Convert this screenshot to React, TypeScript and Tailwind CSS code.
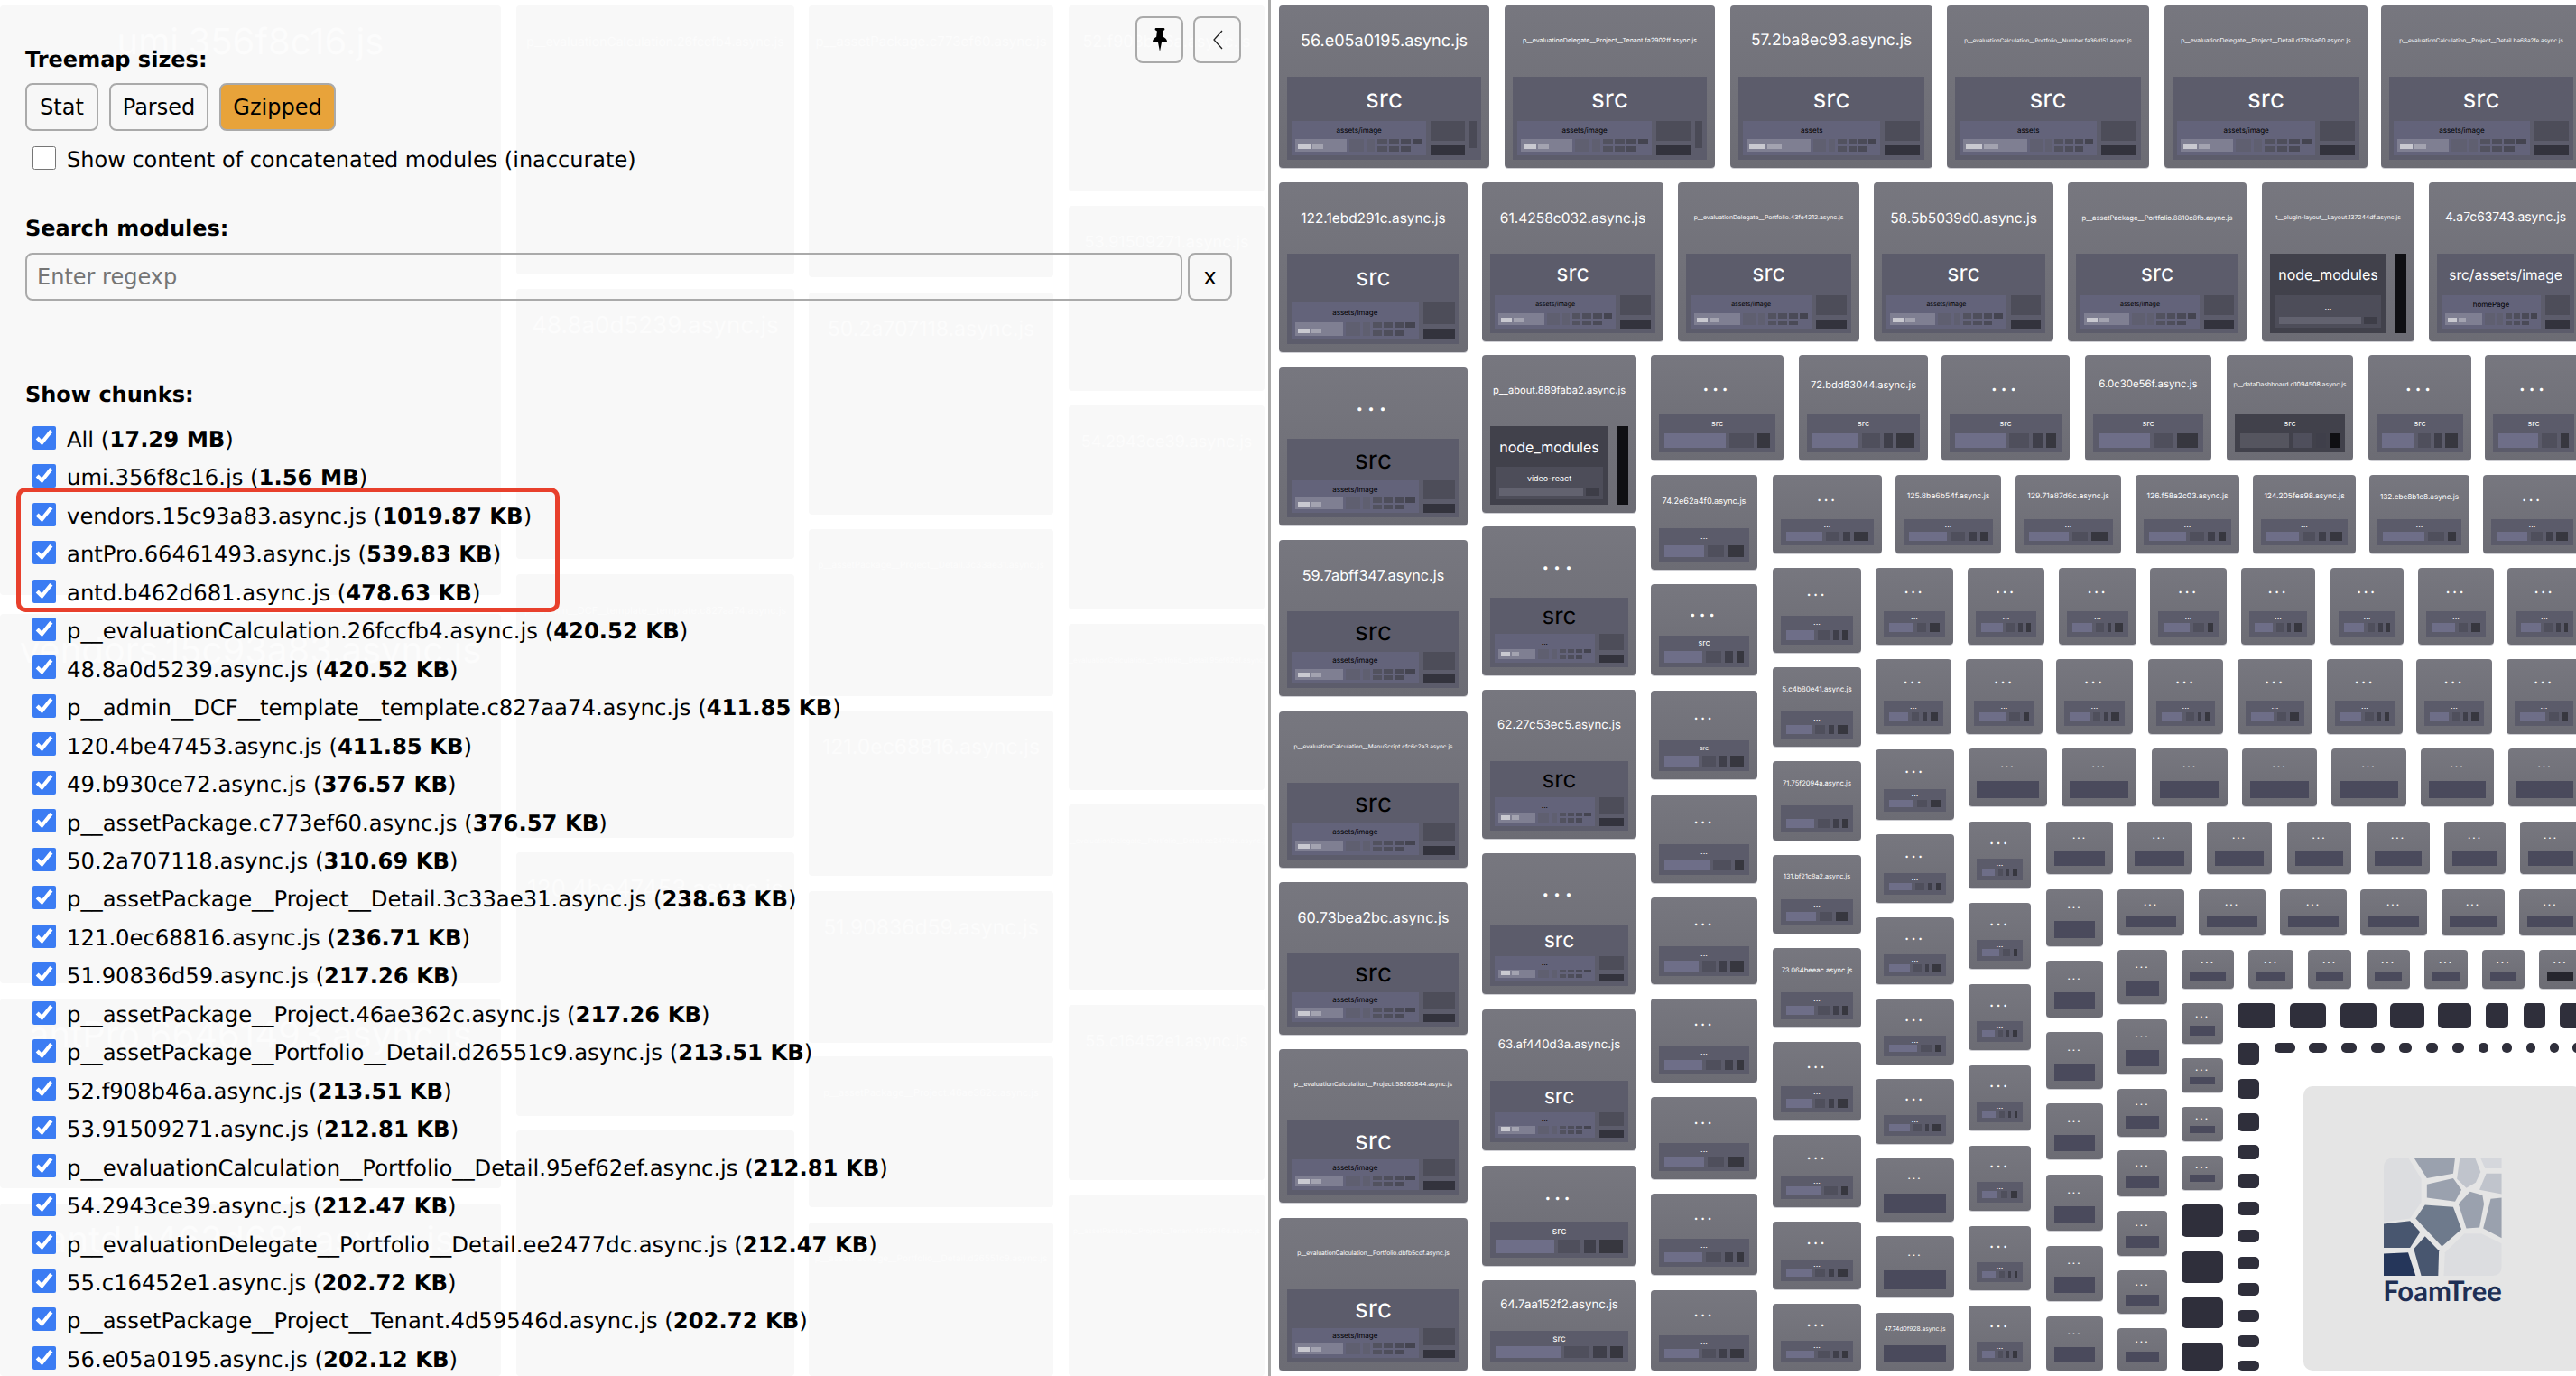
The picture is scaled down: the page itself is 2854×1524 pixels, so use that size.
type Variant = 'full' | 'mid' | 'midDark' | 'small' | 'plain' | 'plainDark' | 'nm' | 'solid';

type TileData = {
  x: number;
  y: number;
  r: number;
  b: number;
  title?: string;
  v?: Variant;
  label?: string;
  labelSize?: number;
  blackLabel?: boolean;
  sub?: string;
  subLabel?: string;
  bar?: boolean;
};

const CHUNKS = [
  ['All', '17.29 MB'],
  ['umi.356f8c16.js', '1.56 MB'],
  ['vendors.15c93a83.async.js', '1019.87 KB'],
  ['antPro.66461493.async.js', '539.83 KB'],
  ['antd.b462d681.async.js', '478.63 KB'],
  ['p__evaluationCalculation.26fccfb4.async.js', '420.52 KB'],
  ['48.8a0d5239.async.js', '420.52 KB'],
  ['p__admin__DCF__template__template.c827aa74.async.js', '411.85 KB'],
  ['120.4be47453.async.js', '411.85 KB'],
  ['49.b930ce72.async.js', '376.57 KB'],
  ['p__assetPackage.c773ef60.async.js', '376.57 KB'],
  ['50.2a707118.async.js', '310.69 KB'],
  ['p__assetPackage__Project__Detail.3c33ae31.async.js', '238.63 KB'],
  ['121.0ec68816.async.js', '236.71 KB'],
  ['51.90836d59.async.js', '217.26 KB'],
  ['p__assetPackage__Project.46ae362c.async.js', '217.26 KB'],
  ['p__assetPackage__Portfolio__Detail.d26551c9.async.js', '213.51 KB'],
  ['52.f908b46a.async.js', '213.51 KB'],
  ['53.91509271.async.js', '212.81 KB'],
  ['p__evaluationCalculation__Portfolio__Detail.95ef62ef.async.js', '212.81 KB'],
  ['54.2943ce39.async.js', '212.47 KB'],
  ['p__evaluationDelegate__Portfolio__Detail.ee2477dc.async.js', '212.47 KB'],
  ['55.c16452e1.async.js', '202.72 KB'],
  ['p__assetPackage__Project__Tenant.4d59546d.async.js', '202.72 KB'],
  ['56.e05a0195.async.js', '202.12 KB'],
];

// faint treemap that shows through the sidebar
const GHOSTS: [number, number, number, number, string, number][] = [
  [0, 6, 555, 659, 'umi.356f8c16.js', 40],
  [0, 680, 555, 1089, 'vendors.15c93a83.async.js', 40],
  [0, 1106, 555, 1316, 'antPro.66461493.async.js', 40],
  [0, 1333, 555, 1524, 'antd.b462d681.async.js', 40],
  [572, 6, 880, 304, 'p__evaluationCalculation.26fccfb4.async.js', 14],
  [572, 320, 880, 619, '48.8a0d5239.async.js', 26],
  [572, 636, 880, 928, 'p__admin__DCF__template__template.c827aa74.async.js', 11],
  [572, 944, 880, 1236, '120.4be47453.async.js', 26],
  [572, 1252, 880, 1524, 'p__assetPackage__Project__Tenant.4d59546d.async.js', 11],
  [896, 6, 1167, 307, 'p__assetPackage.c773ef60.async.js', 15],
  [896, 324, 1167, 570, '50.2a707118.async.js', 23],
  [896, 586, 1167, 771, 'p__assetPackage__Project__Detail.3c33ae31.async.js', 10],
  [896, 787, 1167, 970, '121.0ec68816.async.js', 23],
  [896, 987, 1167, 1155, '51.90836d59.async.js', 23],
  [896, 1170, 1167, 1337, 'p__assetPackage__Project.46ae362c.async.js', 11],
  [896, 1354, 1167, 1524, 'p__assetPackage__Portfolio__Detail.d26551c9.async.js', 10],
  [1184, 6, 1401, 212, '52.f908b46a.async.js', 18],
  [1184, 228, 1401, 433, '53.91509271.async.js', 18],
  [1184, 449, 1401, 675, '54.2943ce39.async.js', 18],
  [1184, 691, 1401, 875, 'p__evaluationCalculation__Portfolio__Detail.95ef62ef.async.js', 8],
  [1184, 891, 1401, 1097, 'p__evaluationDelegate__Portfolio__Detail.ee2477dc.async.js', 8],
  [1184, 1113, 1401, 1307, '55.c16452e1.async.js', 18],
  [1184, 1323, 1401, 1524, 'p__assetPackage__Project__Tenant.4d59546d.async.js', 8],
];

const col = (x: number, r: number, spans: [number, number][], v: Variant, titles: string[] = []): TileData[] =>
  spans.map(([y, b], i) => ({ x, r, y, b, v, title: titles[i] ?? '...' }));

const row = (y: number, b: number, spans: [number, number][], v: Variant, titles: string[] = []): TileData[] =>
  spans.map(([x, r], i) => ({ x, r, y, b, v, title: titles[i] ?? '...' }));

const TILES: TileData[] = [
  // first row
  { x: 1417, y: 6, r: 1650, b: 186, title: '56.e05a0195.async.js', bar: true },
  { x: 1667, y: 6, r: 1900, b: 186, title: 'p__evaluationDelegate__Project__Tenant.fa2902ff.async.js', bar: true },
  { x: 1917, y: 6, r: 2141, b: 186, title: '57.2ba8ec93.async.js', sub: 'assets' },
  { x: 2157, y: 6, r: 2381, b: 186, title: 'p__evaluationCalculation__Portfolio__Number.fa36d151.async.js', sub: 'assets' },
  { x: 2398, y: 6, r: 2623, b: 186, title: 'p__evaluationDelegate__Project__Detail.d73b5a60.async.js' },
  { x: 2638, y: 6, r: 2860, b: 186, title: 'p__evaluationCalculation__Project__Detail.ba68a2fe.async.js' },
  // second row
  { x: 1417, y: 202, r: 1626, b: 390, title: '122.1ebd291c.async.js', labelSize: 26 },
  { x: 1642, y: 202, r: 1843, b: 378, title: '61.4258c032.async.js', subLabel: 'small', labelSize: 25 },
  { x: 1859, y: 202, r: 2060, b: 378, title: 'p__evaluationDelegate__Portfolio.43fe4212.async.js', subLabel: 'small', labelSize: 25 },
  { x: 2076, y: 202, r: 2275, b: 378, title: '58.5b5039d0.async.js', subLabel: 'small', labelSize: 25 },
  { x: 2291, y: 202, r: 2489, b: 378, title: 'p__assetPackage__Portfolio.8810c8fb.async.js', subLabel: 'small', labelSize: 25 },
  { x: 2506, y: 202, r: 2675, b: 378, title: 't__plugin-layout__Layout.137244df.async.js', v: 'nm', sub: '...', labelSize: 16 },
  { x: 2691, y: 202, r: 2861, b: 378, title: '4.a7c63743.async.js', label: 'src/assets/image', labelSize: 15.5, sub: 'homePage' },
  // first column
  { x: 1417, y: 407, r: 1626, b: 582, blackLabel: true },
  { x: 1417, y: 598, r: 1626, b: 771, title: '59.7abff347.async.js', blackLabel: true },
  { x: 1417, y: 788, r: 1626, b: 961, title: 'p__evaluationCalculation__ManuScript.cfc6c2a3.async.js', blackLabel: true },
  { x: 1417, y: 977, r: 1626, b: 1146, title: '60.73bea2bc.async.js', blackLabel: true },
  { x: 1417, y: 1162, r: 1626, b: 1332, title: 'p__evaluationCalculation__Project.58263844.async.js' },
  { x: 1417, y: 1349, r: 1626, b: 1518, title: 'p__evaluationCalculation__Portfolio.dbfb5cdf.async.js' },
  // second column
  { x: 1642, y: 393, r: 1813, b: 568, title: 'p__about.889faba2.async.js', v: 'nm', sub: 'video-react', labelSize: 16 },
  { x: 1642, y: 583, r: 1813, b: 748, labelSize: 26, blackLabel: true, sub: '...' },
  { x: 1642, y: 764, r: 1813, b: 929, title: '62.27c53ec5.async.js', labelSize: 26, blackLabel: true, sub: '...' },
  { x: 1642, y: 945, r: 1813, b: 1101, labelSize: 23, sub: '...' },
  { x: 1642, y: 1118, r: 1813, b: 1274, title: '63.af440d3a.async.js', labelSize: 23, sub: '...' },
  { x: 1642, y: 1291, r: 1813, b: 1402, v: 'mid', label: 'src', labelSize: 11 },
  { x: 1642, y: 1418, r: 1813, b: 1518, title: '64.7aa152f2.async.js', v: 'mid', label: 'src', labelSize: 10 },
  // third column
  ...col(1829, 1947, [[526, 631]], 'mid', ['74.2e62a4f0.async.js']),
  { x: 1829, y: 647, r: 1947, b: 748, v: 'mid', label: 'src' },
  { x: 1829, y: 765, r: 1947, b: 863, v: 'mid', label: 'src', labelSize: 7 },
  ...col(1829, 1947, [[880, 978], [994, 1090], [1106, 1199], [1215, 1306], [1322, 1412], [1429, 1518]], 'small'),
  // row of src tiles
  { x: 1829, y: 393, r: 1976, b: 510, v: 'mid', label: 'src' },
  { x: 1993, y: 393, r: 2136, b: 510, v: 'mid', label: 'src', title: '72.bdd83044.async.js' },
  { x: 2151, y: 393, r: 2293, b: 510, v: 'mid', label: 'src' },
  { x: 2310, y: 393, r: 2450, b: 510, v: 'mid', label: 'src', title: '6.0c30e56f.async.js' },
  { x: 2467, y: 393, r: 2607, b: 510, v: 'midDark', label: 'src', title: 'p__dataDashboard.d1094508.async.js' },
  { x: 2624, y: 393, r: 2738, b: 510, v: 'mid', label: 'src' },
  { x: 2753, y: 393, r: 2861, b: 510, v: 'mid', label: 'src' },
  // small rows
  ...row(526, 613, [[1964, 2085], [2100, 2217], [2233, 2350], [2366, 2481], [2496, 2610], [2625, 2736], [2751, 2860]], 'small', [
    '...',
    '125.8ba6b54f.async.js',
    '129.71a87d6c.async.js',
    '126.f58a2c03.async.js',
    '124.205fea98.async.js',
    '132.ebe8b1e8.async.js',
  ]),
  ...col(1964, 2062, [[629, 723]], 'small'),
  ...row(629, 714, [[2078, 2164], [2180, 2265], [2281, 2367], [2382, 2467], [2483, 2565], [2582, 2663], [2679, 2763], [2778, 2860]], 'small'),
  ...row(730, 813, [[2078, 2162], [2178, 2263], [2278, 2363], [2380, 2463], [2479, 2562], [2578, 2662], [2677, 2761], [2777, 2860]], 'small'),
  ...col(1964, 2062, [[739, 827], [843, 931], [947, 1034], [1050, 1138], [1154, 1241], [1257, 1337], [1353, 1428], [1444, 1518]], 'small', [
    '5.c4b80e41.async.js',
    '71.75f2094a.async.js',
    '131.bf21c8a2.async.js',
    '73.064beeac.async.js',
  ]),
  ...col(2078, 2165, [[830, 908], [924, 1000], [1016, 1090], [1107, 1179], [1195, 1267]], 'small'),
  ...col(2078, 2165, [[1283, 1353], [1369, 1437], [1454, 1518]], 'plain', ['...', '...', '47.74d0f928.async.js']),
  ...col(2181, 2250, [[910, 984], [1000, 1073], [1090, 1163], [1180, 1252], [1269, 1341], [1358, 1429], [1446, 1518]], 'small'),
  ...row(829, 893, [[2181, 2268], [2284, 2367], [2384, 2468], [2484, 2567], [2583, 2666], [2682, 2763], [2779, 2860]], 'plain'),
  ...row(910, 968, [[2267, 2341], [2356, 2429], [2445, 2517], [2534, 2605], [2622, 2692], [2708, 2776], [2792, 2860]], 'plain'),
  ...row(985, 1036, [[2346, 2420], [2436, 2510], [2526, 2600], [2615, 2689], [2705, 2775], [2791, 2860]], 'plain'),
  ...col(2267, 2330, [[985, 1048], [1064, 1127], [1143, 1206], [1222, 1284], [1301, 1363], [1380, 1441], [1458, 1518]], 'plain'),
  ...col(2346, 2401, [[1052, 1112], [1129, 1190], [1206, 1259], [1274, 1325], [1341, 1391], [1407, 1455], [1471, 1518]], 'plain'),
  ...row(1052, 1095, [[2417, 2475], [2491, 2541], [2557, 2605], [2622, 2670], [2686, 2734], [2750, 2797]], 'plain'),
  { x: 2813, y: 1052, r: 2860, b: 1095, v: 'plainDark' },
  ...col(2417, 2463, [[1111, 1156], [1172, 1210], [1226, 1264], [1280, 1318]], 'plain'),
  // dark leftovers with no room for a label
  ...col(2417, 2463, [[1334, 1370], [1386, 1421], [1437, 1471], [1487, 1518]], 'solid'),
  ...row(1111, 1139, [[2479, 2521], [2537, 2577], [2593, 2633], [2648, 2686], [2701, 2738], [2754, 2779], [2796, 2820], [2836, 2860]], 'solid'),
  ...col(2479, 2503, [[1155, 1179], [1195, 1217], [1233, 1253], [1268, 1284], [1300, 1316], [1331, 1346], [1362, 1376], [1392, 1406], [1421, 1435], [1451, 1464], [1479, 1492], [1507, 1518]], 'solid'),
  ...row(1155, 1166, [[2520, 2543], [2558, 2578], [2594, 2611], [2627, 2642], [2658, 2672], [2688, 2701], [2717, 2730], [2746, 2757], [2772, 2783], [2799, 2809], [2825, 2835], [2850, 2860]], 'solid'),
];

function titleSize(w: number, title: string) {
  // hash-only names run wider per character than the long camelCase ones
  if (title.length < 25) return (0.79 * w) / (0.51 * title.length);
  return (0.78 * w) / (0.46 * title.length);
}

function PinIcon() {
  return (
    <svg width="16" height="26" viewBox="0 0 46 75">
      <path d="M12 0h22a4 4 0 0 1 1 8l-3 2 2 18c6 3 11 8 12 14 0 2-1 3-3 3H29l-6 30-6-30H3c-2 0-3-1-3-3 1-6 6-11 12-14l2-18-3-2a4 4 0 0 1 1-8z" fill="#000" />
    </svg>
  );
}

function FoamTreeLogo() {
  return (
    <svg width="131" height="131" viewBox="1055 960 315 330" preserveAspectRatio="none">
      <path d="M1085 960h35l35 60v65l-30 45-70 10v-150q0-30 30-30z" fill="#dcdde0" />
      <path d="M1135 960h110l-5 45-70 13z" fill="#9aa1ae" />
      <path d="M1258 960h40l15 40-13 30-25 15-25-25z" fill="#c0c4cc" />
      <path d="M1313 962h56v28h-44z" fill="#d5d7dc" />
      <path d="M1328 1005h41v57l-59-12z" fill="#c0c4cc" />
      <path d="M1170 1035l70-17 22 32-17 33-75-11z" fill="#9aa1ae" />
      <path d="M1285 1055l33 10 4 25-12 65-35 3-21-68z" fill="#9aa1ae" />
      <path d="M1340 1075l29-3v113l-49-27z" fill="#9aa1ae" />
      <path d="M1165 1092l75 6 22 62-52 48-70-78z" fill="#6e7a8c" />
      <path d="M1055 1145l70-8 27 31-27 44h-70z" fill="#48566f" />
      <path d="M1165 1180l37 40-2 70h-45l-20-75z" fill="#48566f" />
      <path d="M1270 1172h45l54 28v65q0 25-24 25h-130l3-65z" fill="#dcdde0" />
      <path d="M1055 1228l65-3 20 65h-85z" fill="#25365a" />
    </svg>
  );
}

function Thumbs({ wide }: { wide?: boolean }) {
  return (
    <div className="flex h-[40%] gap-[3px]">
      <div className={`flex items-end gap-[2px] bg-[#7f7f92] p-[3px] ${wide ? 'flex-[9]' : 'flex-[6]'}`}>
        <span className="h-[5px] w-[28%] bg-[#c9c9d0]" />
        <span className="h-[5px] w-[24%] bg-[#a3a3b0]" />
      </div>
      <div className="flex-[2] bg-[#5f5f70]" />
      <div className="flex-[1] bg-[#5f5f70]" />
      <div className="grid flex-[6] grid-cols-4 gap-[2px]">
        <span className="bg-[#52525f]" />
        <span className="bg-[#4e4e5b]" />
        <span className="bg-[#4a4a57]" />
        <span className="bg-[#444450]" />
        <span className="bg-[#52525f]" />
        <span className="bg-[#4e4e5b]" />
        <span className="bg-[#4a4a57]" />
        <span className="bg-transparent" />
      </div>
    </div>
  );
}

function FullPanel({ t }: { t: TileData }) {
  const sub = t.sub ?? 'assets/image';
  return (
    <div className="flex h-full flex-col bg-[#5c5c6b] px-[5px] pb-[5px]">
      <div
        className={`flex flex-1 items-center justify-center whitespace-nowrap ${t.blackLabel ? 'text-black' : 'text-white'}`}
        style={{ fontSize: t.labelSize ?? 28 }}
      >
        {t.label ?? 'src'}
      </div>
      <div className="flex h-[44%] gap-[5px]">
        <div className="flex flex-[15] flex-col bg-[#63637a] px-[4px] pb-[4px]">
          <div className={`flex flex-1 items-center justify-center text-black ${t.subLabel === 'small' ? 'text-[7px]' : 'text-[8px]'}`}>{sub}</div>
          <Thumbs wide={sub === 'assets'} />
        </div>
        <div className="flex flex-[4] flex-col gap-[5px]">
          <div className="flex-[2] bg-[#4d4d59]" />
          <div className="flex-1 bg-[#33333d]" />
        </div>
        {t.bar && <div className="mb-[8px] w-[8px] bg-[#4a4a56]" />}
      </div>
    </div>
  );
}

function NodeModulesPanel({ t }: { t: TileData }) {
  return (
    <div className="flex h-full gap-[10px]">
      <div className="flex flex-1 flex-col bg-[#41414b] px-[6px] pb-[6px]">
        <div className="flex flex-1 items-center justify-center whitespace-nowrap text-white" style={{ fontSize: t.labelSize ?? 16 }}>
          node_modules
        </div>
        <div className="flex h-[44%] flex-col bg-[#4d4d59] p-[4px]">
          <div className="flex flex-1 items-center justify-center text-[9px] text-white">{t.sub}</div>
          <div className="flex h-[30%] gap-[3px]">
            <span className="flex-[6] bg-[#62626f]" />
            <span className="flex-1 bg-[#3d3d47]" />
          </div>
        </div>
      </div>
      <div className="w-[12px] bg-[#0f0f13]" />
    </div>
  );
}

function BlocksPanel({ t, dark, index }: { t: TileData; dark?: boolean; index: number }) {
  return (
    <div className={`flex h-full flex-col px-[6px] pb-[5px] ${dark ? 'bg-[#41414b]' : 'bg-[#5b5b6a]'}`}>
      <div className="flex flex-1 items-center justify-center leading-none text-white" style={{ fontSize: t.labelSize ?? 9 }}>
        {t.label ?? '...'}
      </div>
      <div className="flex h-[42%] gap-[4px]">
        <span className={`flex-[5] ${dark ? 'bg-[#55555f]' : 'bg-[#6e6e88]'}`} />
        <span className="flex-[2] bg-[#4f4f5c]" />
        {index % 3 !== 2 && <span className="flex-[1] bg-[#3f3f4a]" />}
        <span className={`${index % 2 ? 'flex-[1]' : 'flex-[2]'} ${dark ? 'bg-[#0f0f13]' : 'bg-[#37373f]'}`} />
      </div>
    </div>
  );
}

function Tile({ t, index }: { t: TileData; index: number }) {
  const w = t.r - t.x;
  const h = t.b - t.y;
  const v = t.v ?? 'full';
  const title = t.title ?? '...';
  const isDots = title === '...';

  if (v === 'solid') {
    return <div className="absolute rounded-[5px] bg-[#2f2f3b]" style={{ left: t.x - 1408, top: t.y, width: w, height: h }} />;
  }

  const fullSize = v === 'full' || v === 'nm';
  const headH = fullSize ? 79 : Math.round(h * 0.56);
  const dotSize = fullSize ? 24 : h > 100 ? 20 : h > 70 ? 14 : 10;

  return (
    <div
      className="absolute flex flex-col overflow-hidden rounded-[4px] bg-linear-to-b from-[#77777f] to-[#6c6c74] px-[9px] pb-[9px] shadow-[0_1px_0_#cfcfd4]"
      style={{ left: t.x - 1408, top: t.y, width: w, height: h }}
    >
      <div className="flex flex-none items-center justify-center" style={{ height: headH }}>
        {isDots ? (
          <span className="font-bold leading-none tracking-[0.2em] text-white" style={{ fontSize: dotSize }}>
            ...
          </span>
        ) : (
          <span className="whitespace-nowrap text-white" style={{ fontSize: titleSize(w, title) }}>
            {title}
          </span>
        )}
      </div>
      <div className="min-h-0 flex-1">
        {v === 'full' && <FullPanel t={t} />}
        {v === 'nm' && <NodeModulesPanel t={t} />}
        {v === 'mid' && <BlocksPanel t={t} index={index} />}
        {v === 'midDark' && <BlocksPanel t={t} dark index={index} />}
        {v === 'small' && <BlocksPanel t={t} index={index} />}
        {v === 'plain' && <div className="h-full bg-[#4a4a5c]" />}
        {v === 'plainDark' && <div className="h-full bg-[#26262e]" />}
      </div>
    </div>
  );
}

function Heading({ children, className }: { children: string; className: string }) {
  return <h2 className={`text-[24px] leading-[28px] font-bold text-black ${className}`}>{children}</h2>;
}

export default function App() {
  return (
    <div className="flex h-[1524px] w-[2854px] overflow-hidden bg-white font-['DejaVu_Sans',sans-serif] text-black [text-rendering:geometricPrecision]">
      <aside className="relative h-full w-[1408px] flex-none overflow-hidden border-r-[3px] border-[#aaaaaa] pl-[28px]">
        <div className="absolute inset-0 font-['Inter',sans-serif]">
          {GHOSTS.map(([x, y, r, b, title, size]) => (
            <div
              key={`${x}-${y}`}
              className="absolute overflow-hidden rounded-[4px] bg-[#f8f8f8] text-[#fcfcfc]"
              style={{ left: x, top: y, width: r - x, height: b - y, fontSize: size }}
            >
              <div className="flex h-[80px] items-center justify-center whitespace-nowrap">{title}</div>
            </div>
          ))}
        </div>

        <div className="relative pt-[52px]">
          <Heading className="">Treemap sizes:</Heading>
          <div className="mt-[12px] flex gap-[12px] text-[24px]">
            <button className="h-[53px] w-[81px] rounded-[8px] border-2 border-[#aaaaaa] bg-[#f7f7f7]">Stat</button>
            <button className="h-[53px] w-[110px] rounded-[8px] border-2 border-[#aaaaaa] bg-[#f7f7f7]">Parsed</button>
            <button className="h-[53px] w-[129px] rounded-[8px] border-2 border-[#aaaaaa] bg-[#e8a33a]">Gzipped</button>
          </div>
          <label className="mt-[17px] ml-[8px] flex h-[26px] items-center gap-[12px] text-[24px]">
            <input type="checkbox" className="h-[26px] w-[26px]" />
            <span className="mt-[4px]">Show content of concatenated modules (inaccurate)</span>
          </label>

          <Heading className="mt-[51px]">Search modules:</Heading>
          <div className="mt-[13px] flex gap-[6px]">
            <input
              placeholder="Enter regexp"
              className="h-[53px] w-[1282px] rounded-[8px] border-2 border-[#aaaaaa] bg-transparent px-[11px] text-[24px] placeholder:text-[#757575]"
            />
            <button className="h-[53px] w-[49px] rounded-[8px] border-2 border-[#aaaaaa] bg-[#f7f7f7] text-[24px]">x</button>
          </div>

          <Heading className="mt-[90px]">Show chunks:</Heading>
          <ul className="mt-[15px]">
            {CHUNKS.map(([name, size]) => (
              <li key={name} className="ml-[8px] flex h-[42.46px] items-center gap-[12px] text-[24.3px] whitespace-nowrap">
                <input type="checkbox" defaultChecked className="mb-[5px] h-[26px] w-[26px] accent-[#3b7cf3]" />
                <span>
                  {name} (<b>{size}</b>)
                </span>
              </li>
            ))}
          </ul>
        </div>

        <div className="absolute top-[18px] left-[1258px] flex gap-[11px]">
          <button className="flex h-[52px] w-[53px] items-center justify-center rounded-[8px] border-2 border-[#aaaaaa]">
            <PinIcon />
          </button>
          <button className="flex h-[52px] w-[53px] items-center justify-center rounded-[8px] border-2 border-[#aaaaaa]">
            <svg width="12" height="22" viewBox="0 0 12 22" fill="none" stroke="#222" strokeWidth="1.3">
              <path d="M11 1 2 11l9 10" />
            </svg>
          </button>
        </div>

        {/* red annotation around the three biggest chunks */}
        <div className="absolute top-[540px] left-[18px] h-[138px] w-[602px] rounded-[10px] border-[5px] border-[#e8402c]" />
      </aside>

      <main className="relative h-full flex-1 overflow-hidden font-['Inter',sans-serif]">
        {TILES.map((t, i) => (
          <Tile key={`${t.x}-${t.y}`} t={t} index={i} />
        ))}
        <div className="absolute top-[1203px] left-[1144px] flex h-[315px] w-[308px] flex-col items-center rounded-[10px] bg-[#e5e5e5] pt-[79px]">
          <FoamTreeLogo />
          <span className="mt-[2px] font-['Lato',sans-serif] text-[31px] leading-[28px] font-bold text-[#1f2f54]">FoamTree</span>
        </div>
      </main>
    </div>
  );
}
